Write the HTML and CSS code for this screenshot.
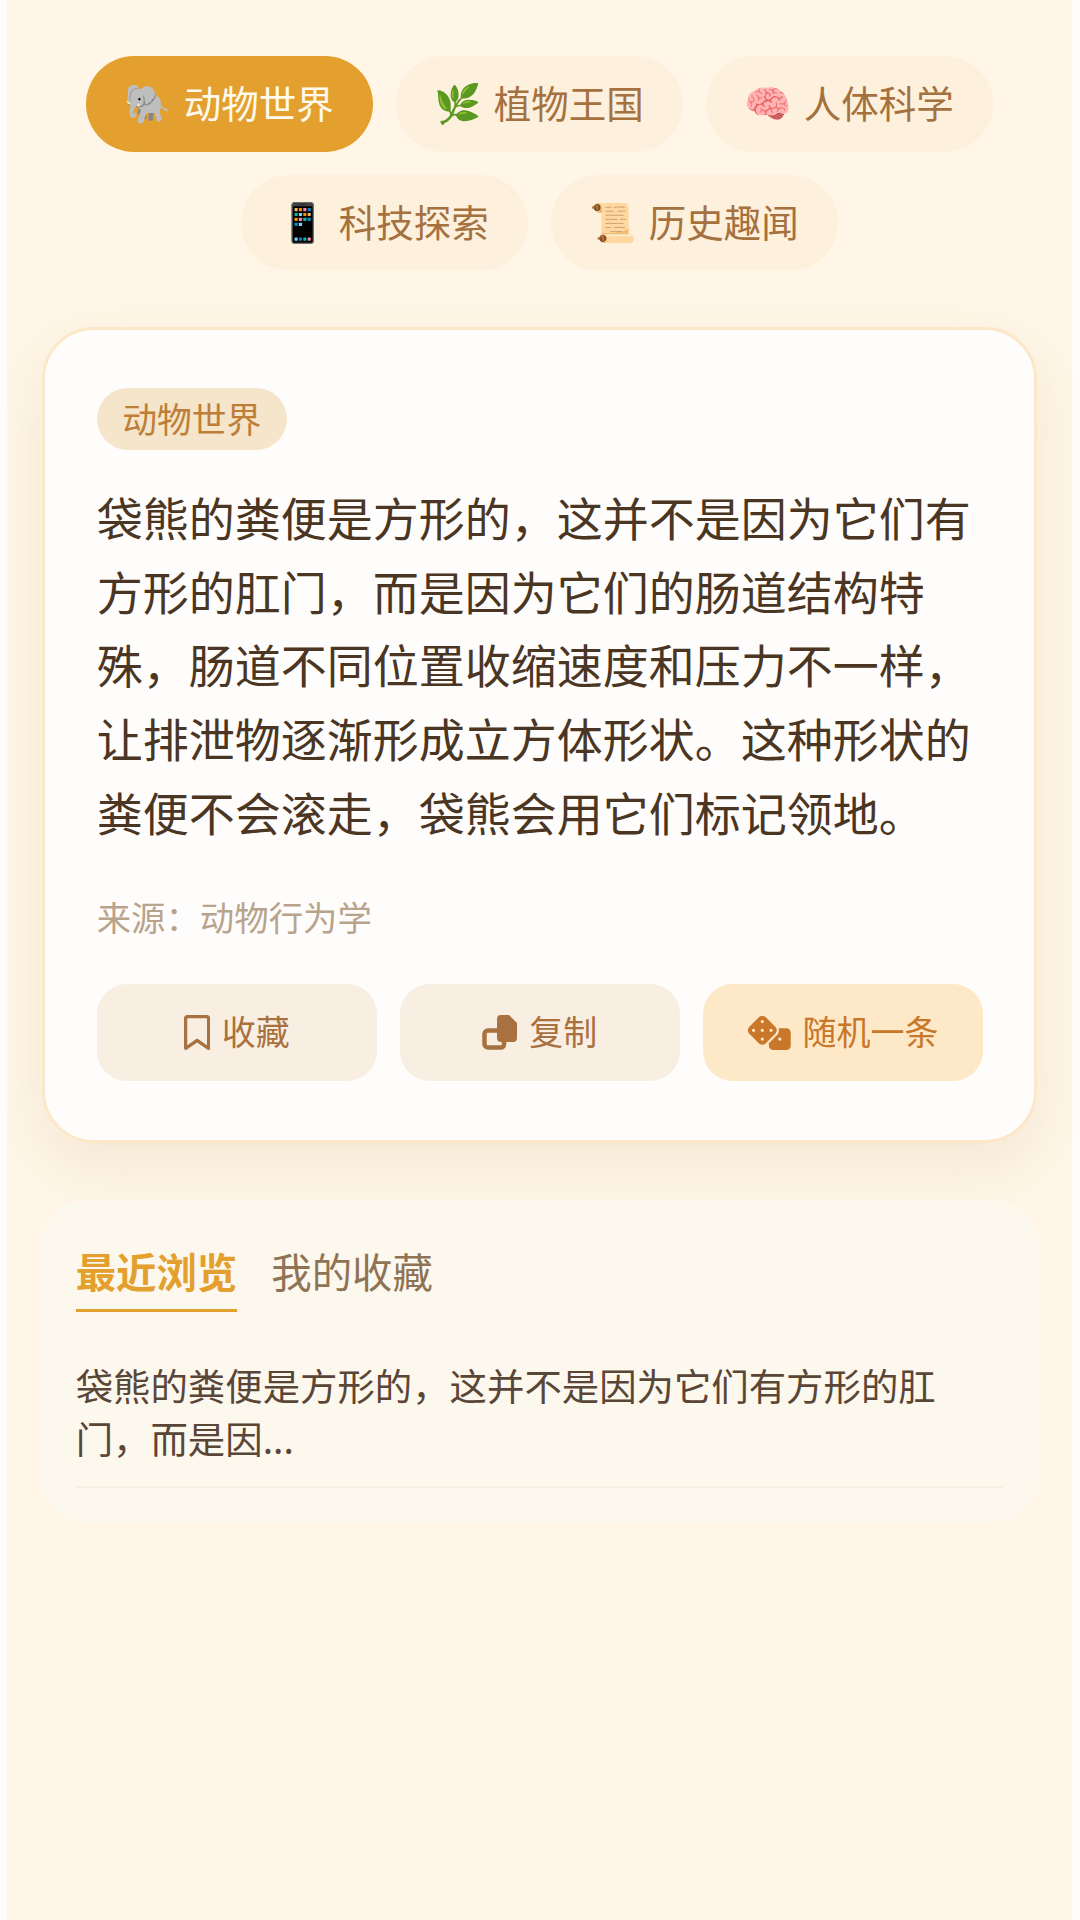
FILE: index.html
```html
<!DOCTYPE html>
<html lang="zh-CN">
<head>
    <meta charset="UTF-8">
    <meta name="viewport" content="width=device-width, initial-scale=1.0">
    <title>冷知识</title>
    <link rel="stylesheet" href="styles.css">
</head>
<body>

<div class="app">
    <div class="categories">
        <button class="pill active"><span class="emoji">🐘</span><span class="pill-label">动物世界</span></button>
        <button class="pill"><span class="emoji">🌿</span><span class="pill-label">植物王国</span></button>
        <button class="pill"><span class="emoji">🧠</span><span class="pill-label">人体科学</span></button>
        <button class="pill"><span class="emoji">📱</span><span class="pill-label">科技探索</span></button>
        <button class="pill"><span class="emoji">📜</span><span class="pill-label">历史趣闻</span></button>
    </div>

    <div class="card">
        <span class="tag">动物世界</span>
        <p class="fact">袋熊的粪便是方形的，这并不是因为它们有方形的肛门，而是因为它们的肠道结构特殊，肠道不同位置收缩速度和压力不一样，让排泄物逐渐形成立方体形状。这种形状的粪便不会滚走，袋熊会用它们标记领地。</p>
        <div class="source">来源：动物行为学</div>
        <div class="actions">
            <button class="action-btn">
                <svg class="icon" viewBox="0 0 384 512"><path d="M0 48C0 21.500 21.500 0 48 0H336c26.500 0 48 21.500 48 48V488c0 9.200-5 17.700-13 22s-17.800 3.900-25.200-1L192 403.400 38.200 509c-7.400 5-17.200 5.500-25.200 1S0 497.200 0 488V48zm48 0V442.400l130.400-89.500c8.200-5.600 19-5.600 27.200 0L336 442.400V48H48z"/></svg>
                <span>收藏</span>
            </button>
            <button class="action-btn">
                <svg class="icon" viewBox="0 0 35 35"><path d="M19 0h8l8 8v15a4 4 0 0 1-4 4H19a4 4 0 0 1-4-4V4a4 4 0 0 1 4-4z"/><path class="icon-line" d="M15 15.500H6a3.500 3.500 0 0 0-3.500 3.500v10A3.500 3.500 0 0 0 6 32.500h13a3 3 0 0 0 3-3V27"/></svg>
                <span>复制</span>
            </button>
            <button class="action-btn random">
                <svg class="icon" viewBox="0 0 640 512"><path d="M274.900 34.300c-28.100-28.100-73.700-28.100-101.800 0L34.300 173.100c-28.100 28.100-28.100 73.700 0 101.800L173.100 413.700c28.100 28.100 73.700 28.100 101.800 0L413.700 274.900c28.100-28.100 28.100-73.700 0-101.800L274.900 34.300zM200 224a24 24 0 1 1 48 0 24 24 0 1 1 -48 0zM96 200a24 24 0 1 1 0 48 24 24 0 1 1 0-48zM224 376a24 24 0 1 1 0-48 24 24 0 1 1 0 48zM352 200a24 24 0 1 1 0 48 24 24 0 1 1 0-48zM224 120a24 24 0 1 1 0-48 24 24 0 1 1 0 48zm96 328c0 35.300 28.700 64 64 64H576c35.300 0 64-28.700 64-64V256c0-35.300-28.700-64-64-64H461.700c11.600 36 3.100 77-25.400 105.500L320 413.800V448zM480 328a24 24 0 1 1 0 48 24 24 0 1 1 0-48z"/></svg>
                <span>随机一条</span>
            </button>
        </div>
    </div>

    <div class="history">
        <div class="tabs">
            <div class="tab active">最近浏览</div>
            <div class="tab">我的收藏</div>
        </div>
        <div class="history-item">袋熊的粪便是方形的，这并不是因为它们有方形的肛门，而是因...</div>
    </div>
</div>

</body>
</html>
```

FILE: styles.css
```css
* {
    box-sizing: border-box;
}

body {
    margin: 0;
    background: #fefdfb;
    font-family: "Noto Sans CJK SC", "Noto Sans", sans-serif;
}

button {
    font-family: inherit;
}

.app {
    min-height: 1920px;
    margin: 0 8.3px 0 6.7px;
    padding: 56px 35px 0;
    background: #fff6e7;
}

.categories {
    display: flex;
    flex-wrap: wrap;
    justify-content: center;
    gap: 23px;
}

.pill {
    display: flex;
    align-items: center;
    justify-content: center;
    width: 287px;
    height: 96px;
    border: none;
    border-radius: 48px;
    background: #fdf0dc;
    color: #a5713f;
    font-size: 37.5px;
}

.pill.active {
    background: #e3a02f;
    color: #fff9ee;
}

.pill-label {
    margin-bottom: 5px;
}

.emoji {
    margin-right: 12px;
    font-family: "Noto Color Emoji", sans-serif;
    font-size: 38px;
}

.card {
    margin-top: 56px;
    padding: 58px 51px 0 52px;
    height: 816px;
    background: #fffdfb;
    border: 3px solid #fce8c8;
    border-radius: 52px;
    box-shadow: 0 22px 55px rgba(150, 110, 50, 0.1);
}

.tag {
    display: inline-block;
    height: 62px;
    padding: 0 25.5px;
    border-radius: 31px;
    background: #f5e5cb;
    color: #be7e37;
    font-size: 34.8px;
    line-height: 60px;
}

.fact {
    margin: 30px 0 0;
    color: #4a3622;
    font-size: 46px;
    line-height: 73.7px;
}

.source {
    margin-top: 42px;
    color: #b8a48c;
    font-size: 34.4px;
    line-height: 50px;
}

.actions {
    display: flex;
    gap: 23px;
    margin-top: 43px;
}

.action-btn {
    display: flex;
    flex: 1;
    align-items: center;
    justify-content: center;
    gap: 12px;
    height: 97px;
    border: none;
    border-radius: 30px;
    background: #f8efe2;
    color: #a8713f;
    font-size: 34px;
}

.action-btn span {
    margin-bottom: 3px;
}

.action-btn.random {
    background: #fde9c7;
    color: #c9772a;
}

.icon {
    height: 35px;
    fill: currentColor;
}

.icon-line {
    fill: none;
    stroke: currentColor;
    stroke-width: 4.5;
}

.history {
    margin-top: 57px;
    margin-left: -2px;
    margin-right: -2px;
    height: 322px;
    padding: 36px 36px 0;
    background: #fdf8ee;
    border-radius: 46px;
}

.tabs {
    display: flex;
    gap: 34px;
}

.tab {
    height: 76px;
    color: #8f7355;
    font-size: 40.4px;
    line-height: 70px;
}

.tab.active {
    border-bottom: 3px solid #e3a02f;
    color: #e3a02f;
    font-weight: 700;
}

.history-item {
    margin-top: 47px;
    padding-bottom: 22px;
    border-bottom: 2px solid #f6efe3;
    color: #5a4636;
    font-size: 37.4px;
    line-height: 52.5px;
}
```
